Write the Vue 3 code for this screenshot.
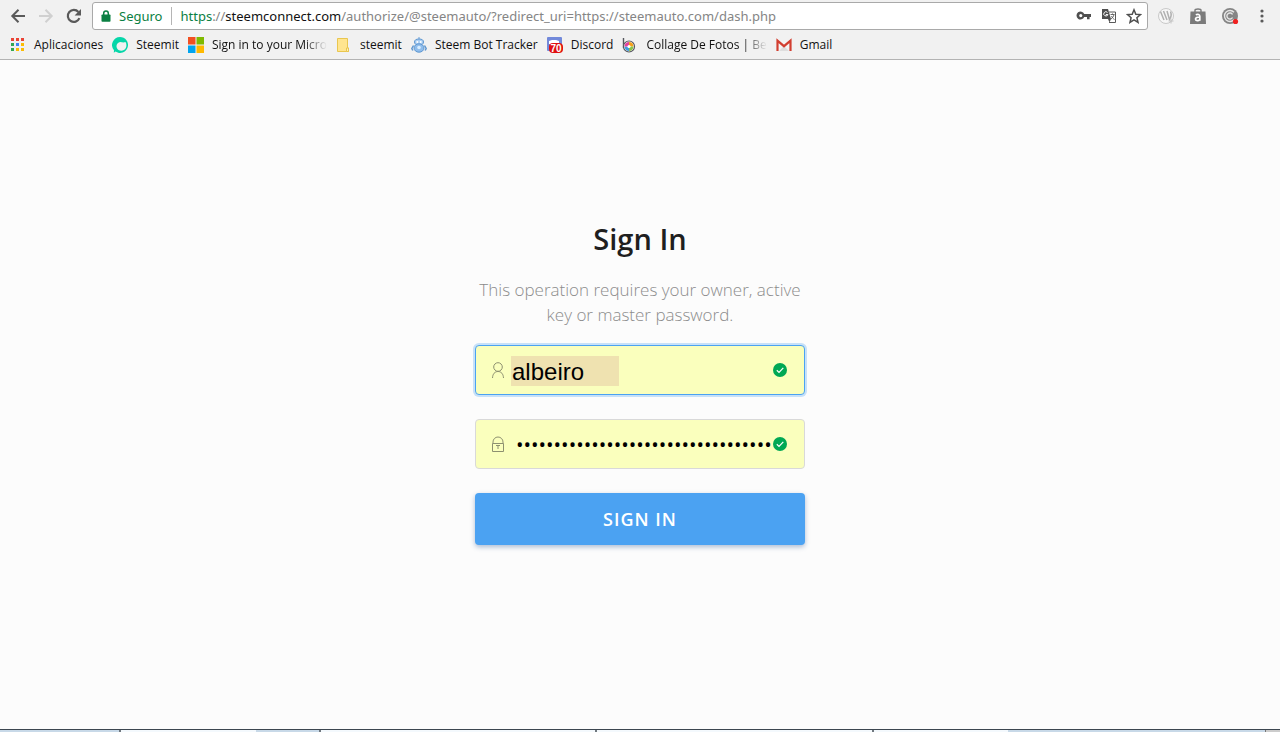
<template>
  <div class="window">
    <header class="chrome">
      <div class="toolbar">
        <button class="nav-btn" aria-label="Atrás">
          <svg width="16" height="16" viewBox="0 0 16 16" fill="none" stroke="#5a5a5a" stroke-width="2">
            <path d="M15 8H2.5M8.5 1.8L2.3 8l6.2 6.2" />
          </svg>
        </button>
        <button class="nav-btn" aria-label="Adelante">
          <svg width="16" height="16" viewBox="0 0 16 16" fill="none" stroke="#d0d0d0" stroke-width="2">
            <path d="M1 8h12.5M7.5 1.8L13.7 8l-6.2 6.2" />
          </svg>
        </button>
        <button class="nav-btn" aria-label="Recargar">
          <svg width="16" height="16" viewBox="0 0 16 16">
            <path d="M13.4 10.2A6 6 0 1 1 12.4 4" fill="none" stroke="#5a5a5a" stroke-width="2.2" />
            <path d="M15 1v6.4H8.6z" fill="#5a5a5a" />
          </svg>
        </button>

        <div class="address">
          <svg class="lock" width="10" height="12" viewBox="0 0 10 12">
            <path d="M2.7 5V3.3a2.3 2.3 0 0 1 4.6 0V5" fill="none" stroke="#0b8043" stroke-width="1.5" />
            <rect x="0.5" y="4.5" width="9" height="7.2" rx="0.8" fill="#0b8043" />
          </svg>
          <span class="secure">Seguro</span>
          <div class="url" role="textbox" aria-label="Dirección" tabindex="0"><span class="scheme">https</span>://<span class="host">steemconnect.com</span>/authorize/@steemauto/?redirect_uri=https://steemauto.com/dash.php</div>
          <button class="address-btn" aria-label="Contraseñas guardadas">
            <svg width="16" height="16" viewBox="0 0 16 16">
              <path fill="#4f4f4f" fill-rule="evenodd" d="M8.2 6A4 4 0 1 0 8.2 9H11v2.3h2.6V9H15V6zM4.8 6a1.6 1.6 0 1 1 0 3.2 1.6 1.6 0 0 1 0-3.2z" />
            </svg>
          </button>
          <button class="address-btn" aria-label="Traducir esta página">
            <svg width="16" height="16" viewBox="0 0 16 16" fill="none">
              <path d="M8 4h6.5v10.5H8" stroke="#5a5a5a" />
              <path d="M1 1h6l3 10H1z" fill="#4f4f4f" />
              <path d="M7 11h3l-1.5 3.5z" fill="#4f4f4f" />
              <path d="M6.5 4.5a2.1 2.1 0 1 0 .4 2H4.8" stroke="#fff" />
              <path d="M9.5 6.5h4M11.5 5.5v1M13 6.5c-.5 2-1.5 3.5-3 4.5M10.5 8c.8 1.8 1.7 2.7 3 3.5" stroke="#5a5a5a" stroke-width="0.9" />
            </svg>
          </button>
          <button class="address-btn" aria-label="Añadir a marcadores">
            <svg width="16" height="16" viewBox="0 0 16 16">
              <path d="M8 1.8l1.8 4.4 4.7.4-3.6 3.1 1.1 4.6-4-2.5-4 2.5 1.1-4.6-3.6-3.1 4.7-.4z" fill="none" stroke="#4f4f4f" stroke-width="1.5" />
            </svg>
          </button>
        </div>

        <div class="extensions">
          <button class="ext-btn" aria-label="Wappalyzer">
            <svg width="18" height="18" viewBox="0 0 18 18" fill="none">
              <circle cx="9" cy="9" r="7.5" fill="#f7f7f7" stroke="#c9c9c9" />
              <path d="M3.5 4.5l3.5 8.5M6.5 4l3.5 9M10 4l2.5 8.5c1.8-2.5 2-5.5 1-8" stroke="#b0b0b0" stroke-width="1.5" />
              <path d="M14 11.5v5M11.5 14h5" stroke="#c4c4c4" />
            </svg>
          </button>
          <button class="ext-btn" aria-label="Compras">
            <svg width="18" height="18" viewBox="0 0 18 18" fill="none">
              <path d="M6 5V3.2C6 1.5 12 1.5 12 3.2V5" stroke="#7b7b7b" stroke-width="1.4" />
              <path d="M1.5 4.5h15l.5 12.5H1z" fill="#7b7b7b" />
              <path d="M6.8 7.8c2-.9 4-.5 4 1.4v4.6M10.8 10c-2.6-.1-4.3.5-4.3 2.1 0 2 3 2.1 4.3.3" stroke="#fff" stroke-width="1.7" />
            </svg>
          </button>
          <button class="ext-btn" aria-label="Extensión C">
            <svg width="18" height="18" viewBox="0 0 18 18" fill="none">
              <circle cx="9" cy="9" r="8" fill="#858585" />
              <path d="M13 5.2a5.5 5.5 0 1 0 0 7.6M11.5 7.5a3 3 0 1 0 0 3" stroke="#e6e6e6" stroke-width="1.4" />
              <circle cx="14.5" cy="14.5" r="2.6" fill="#f02020" />
            </svg>
          </button>
          <button class="ext-btn" aria-label="Menú">
            <svg width="16" height="16" viewBox="0 0 16 16" fill="#5a5a5a">
              <circle cx="8" cy="3" r="1.6" />
              <circle cx="8" cy="8" r="1.6" />
              <circle cx="8" cy="13" r="1.6" />
            </svg>
          </button>
        </div>
      </div>

      <nav class="bookmarks" aria-label="Marcadores">
        <a v-for="b in bookmarks" :key="b.id" href="#" class="bookmark" @click.prevent>
          <svg width="16" height="16" viewBox="0 0 16 16">
            <template v-if="b.id === 'apps'">
              <rect v-for="(c, i) in appColors" :key="i" :x="1 + (i % 3) * 5" :y="1 + Math.floor(i / 3) * 5" width="3" height="3" :fill="c" />
            </template>
            <template v-else-if="b.id === 'steemit'">
              <path fill="#06d6a9" fill-rule="evenodd" d="M8 0a8 8 0 1 1-4.5 14.6L1.8 15.8 2 13.2A8 8 0 0 1 8 0zM13.5 5C10.500 6.200 8.500 4 6 6c-2.300 2-1.800 5.500.5 7 2.500 1.600 6 .7 7.300-2 .9-2 .8-4.200-.3-6z" />
            </template>
            <template v-else-if="b.id === 'microsoft'">
              <path fill="#f25022" d="M0 0h7.5v7.5H0z" />
              <path fill="#7fba00" d="M8.5 0H16v7.5H8.5z" />
              <path fill="#00a4ef" d="M0 8.5h7.5V16H0z" />
              <path fill="#ffb900" d="M8.5 8.5H16V16H8.5z" />
            </template>
            <template v-else-if="b.id === 'folder'">
              <path fill="#ffe58f" stroke="#e9c64f" d="M1.5 1.5h10v9.5h1v3.5h-11z" />
              <path fill="#fff1b8" stroke="#e9c64f" d="M10.5 11h2v3.5h-2z" />
            </template>
            <template v-else-if="b.id === 'bot'">
              <path d="M8 0v3" stroke="#6aa0d8" />
              <ellipse cx="8" cy="5" rx="4.5" ry="3" fill="#a9cdf2" stroke="#5f97d0" />
              <ellipse cx="8" cy="11" rx="5" ry="4.2" fill="#8fbdec" stroke="#5f97d0" />
              <path d="M2.5 8.5L.8 11.5l1 2M13.5 8.5l1.7 3-1 2" fill="none" stroke="#5f97d0" stroke-width="1.5" />
              <circle cx="6.3" cy="5" r="1" fill="#fff" />
              <circle cx="9.7" cy="5" r="1" fill="#fff" />
              <circle cx="8" cy="10.5" r="1.8" fill="#d8edff" />
            </template>
            <template v-else-if="b.id === 'discord'">
              <rect width="15" height="14" rx="1" fill="#7289da" />
              <path fill="#fff" d="M2 4l3-1h4l3 1v3H2z" />
              <rect x="2" y="6" width="14" height="10" rx="4" fill="#e01010" />
              <text x="9" y="15" text-anchor="middle" class="badge">70</text>
            </template>
            <template v-else-if="b.id === 'collage'">
              <path d="M1.5 1v10" stroke="#55565e" stroke-width="1.4" />
              <circle cx="7" cy="9.5" r="5.5" fill="#fff" stroke="#55565e" stroke-width="1.2" />
              <path d="M7 5A4.5 4.5 0 0 1 11.5 9.5H7z" fill="#f6a01a" />
              <path d="M11.5 9.5A4.5 4.5 0 0 1 7 14V9.5z" fill="#8bc34a" />
              <path d="M7 14a4.5 4.5 0 0 1-4.5-4.5H7z" fill="#3f9be0" />
              <path d="M2.5 9.5A4.5 4.5 0 0 1 7 5v4.5z" fill="#e3419b" />
              <circle cx="7" cy="9.5" r="1.6" fill="#fff" />
            </template>
            <template v-else>
              <path fill="#f4f4f4" d="M1 3h14v11H1z" />
              <path fill="#dedede" d="M3 14l5-5 5 5z" />
              <path d="M1.5 14V3.7L8 9.2l6.5-5.5V14" fill="none" stroke="#d23f31" stroke-width="2.2" />
            </template>
          </svg>
          <span :class="{ faded: b.faded }">{{ b.label }}</span>
        </a>
      </nav>
    </header>

    <main class="page">
      <form class="sign-in" @submit.prevent>
        <h1>Sign In</h1>
        <p>This operation requires your owner, active key or master password.</p>

        <div class="field focused">
          <label for="username" aria-label="Username">
            <svg width="14" height="16" viewBox="0 0 14 16" fill="none" stroke="#8d9070">
              <circle cx="7" cy="5" r="4.3" />
              <path d="M1.5 16c.2-4 2.2-6.5 5.5-6.5s5.3 2.5 5.5 6.5" />
            </svg>
          </label>
          <input id="username" v-model="username" class="username" type="text" autocomplete="off" spellcheck="false">
          <svg class="check" width="14" height="14" viewBox="0 0 14 14">
            <circle cx="7" cy="7" r="7" fill="#00a854" />
            <path d="M3.8 7.3l2.2 2.1 4.3-4.6" fill="none" stroke="#fff" stroke-width="1.2" />
          </svg>
        </div>

        <div class="field">
          <label for="password" aria-label="Password">
            <svg width="14" height="16" viewBox="0 0 14 16" fill="none" stroke="#8d9070">
              <path d="M1.5 7.5h11v8h-11zM2 7.5V6a5 5 0 0 1 10 0v1.5M5 9.5h4M7 9.5v3.5" />
            </svg>
          </label>
          <input id="password" v-model="password" class="password" type="password" autocomplete="off">
          <svg class="check" width="14" height="14" viewBox="0 0 14 14">
            <circle cx="7" cy="7" r="7" fill="#00a854" />
            <path d="M3.8 7.3l2.2 2.1 4.3-4.6" fill="none" stroke="#fff" stroke-width="1.2" />
          </svg>
        </div>

        <button class="submit" type="submit">SIGN IN</button>
      </form>
    </main>

    <footer class="taskbar">
      <span class="idle first"></span>
      <span class="task small"></span>
      <span class="idle gap"></span>
      <span class="task"></span>
      <span class="task"></span>
      <span class="task small"></span>
      <span class="idle rest"></span>
      <span class="corner"></span>
    </footer>
  </div>
</template>

<script setup>
import { ref } from 'vue';

const username = ref('albeiro');
const password = ref('x'.repeat(34));

const appColors = [
  '#ea4335', '#ea4335', '#ea4335',
  '#34a853', '#4285f4', '#fbbc05',
  '#34a853', '#fbbc05', '#fbbc05'
];

const bookmarks = [
  { id: 'apps', label: 'Aplicaciones' },
  { id: 'steemit', label: 'Steemit' },
  { id: 'microsoft', label: 'Sign in to your Micro', faded: true },
  { id: 'folder', label: 'steemit' },
  { id: 'bot', label: 'Steem Bot Tracker' },
  { id: 'discord', label: 'Discord' },
  { id: 'collage', label: 'Collage De Fotos | Be', faded: true },
  { id: 'gmail', label: 'Gmail' }
];
</script>

<style>
body {
  margin: 0;
  background: #fcfcfc;
}
</style>

<style scoped>
.window {
  display: flex;
  flex-direction: column;
  min-height: 100vh;
  font-family: "Open Sans", "Noto Sans", sans-serif;
}

button {
  display: flex;
  align-items: center;
  justify-content: center;
  padding: 0;
  border: none;
  background: none;
  cursor: pointer;
}

svg {
  flex-shrink: 0;
}

.chrome {
  background: #f1f1f1;
  border-bottom: 1px solid #b3b3b3;
}

.toolbar {
  display: flex;
  height: 28px;
  padding: 2px 2px 0 4px;
}

.nav-btn {
  width: 28px;
}

.address {
  flex: 1;
  display: flex;
  box-sizing: border-box;
  min-width: 0;
  margin: 0 2px 0 4px;
  padding: 0 1px 0 8px;
  border: 1px solid #a9a9a9;
  border-radius: 3px;
  background: #fff;
  align-items: center;
  font-family: "Noto Sans", "Open Sans", sans-serif;
  font-size: 13px;
  line-height: 18px;
}

.secure {
  margin-left: 8px;
  padding-right: 9px;
  border-right: 1px solid #b5b5b5;
  color: #0b8043;
}

.url {
  flex: 1;
  min-width: 0;
  margin-left: 8px;
  overflow: hidden;
  white-space: nowrap;
  color: #858585;
  outline: none;
}

.scheme { color: #0b8043; }
.host { color: #111; }

.address-btn { width: 25px; }

.extensions { display: flex; }

.ext-btn { width: 32px; }

.bookmarks {
  display: flex;
  gap: 9px;
  height: 29px;
  padding-left: 10px;
}

.bookmark {
  display: flex;
  align-items: center;
  gap: 8px;
  color: #111;
  font-size: 12px;
  line-height: 16px;
  text-decoration: none;
  white-space: nowrap;
}

.faded {
  -webkit-mask-image: linear-gradient(to right, #000 80%, transparent);
  mask-image: linear-gradient(to right, #000 80%, transparent);
}

.badge {
  font: bold 10px "Liberation Sans", sans-serif;
  fill: #fff;
}

.page {
  flex: 1;
  display: flex;
  align-items: center;
  justify-content: center;
}

.sign-in {
  width: 330px;
}

h1 {
  margin: 0 0 19px;
  color: #1f1f1f;
  font-size: 29px;
  font-weight: 600;
  line-height: 38px;
  text-align: center;
}

p {
  margin: 0 0 18px;
  color: #8c8c8c;
  font-size: 17px;
  font-weight: 300;
  line-height: 25px;
  text-align: center;
}

.field {
  display: flex;
  align-items: center;
  box-sizing: border-box;
  height: 50px;
  margin-bottom: 24px;
  padding: 0 17px 0 15px;
  border: 1px solid #d9d9d9;
  border-radius: 4px;
  background: #faffbd;
}

.field.focused {
  border-color: #4ba2f2;
  box-shadow: 0 0 0 2px rgba(75, 162, 242, 0.3);
}

.field label {
  display: flex;
}

.field input {
  min-width: 0;
  padding: 0;
  border: none;
  outline: none;
  background: none;
  color: #000;
}

.field .username {
  box-sizing: border-box;
  width: 108px;
  height: 30px;
  margin: 2px 0 0 6px;
  padding: 2px 0 0 1px;
  background: #efe2b0;
  font-family: "Liberation Sans", Arial, sans-serif;
  font-size: 24px;
}

.field .password {
  flex: 1;
  height: 30px;
  margin-left: 11px;
  font-family: "Open Sans", sans-serif;
  font-size: 20px;
}

.check {
  margin-left: auto;
}

.submit {
  width: 100%;
  height: 52px;
  margin-bottom: 24px;
  border-radius: 4px;
  background: #4ba2f2;
  box-shadow: 0 2px 5px rgba(50, 90, 150, 0.4);
  color: #fff;
  font-family: inherit;
  font-size: 18px;
  font-weight: 600;
  letter-spacing: 1px;
}

.taskbar {
  display: flex;
  height: 2px;
  border-top: 1px solid #3c4650;
  background: #c8d9e8;
}

.task {
  flex: 275;
  border-left: 2px solid #70787f;
  background: #f4f9fd;
}

.task.small { flex: 135; }
.first { flex: 119; }
.gap { flex: 63; }
.rest { flex: 257; }

.corner {
  flex: 14;
  border-left: 1px solid #777;
  background: #ccc;
}
</style>
